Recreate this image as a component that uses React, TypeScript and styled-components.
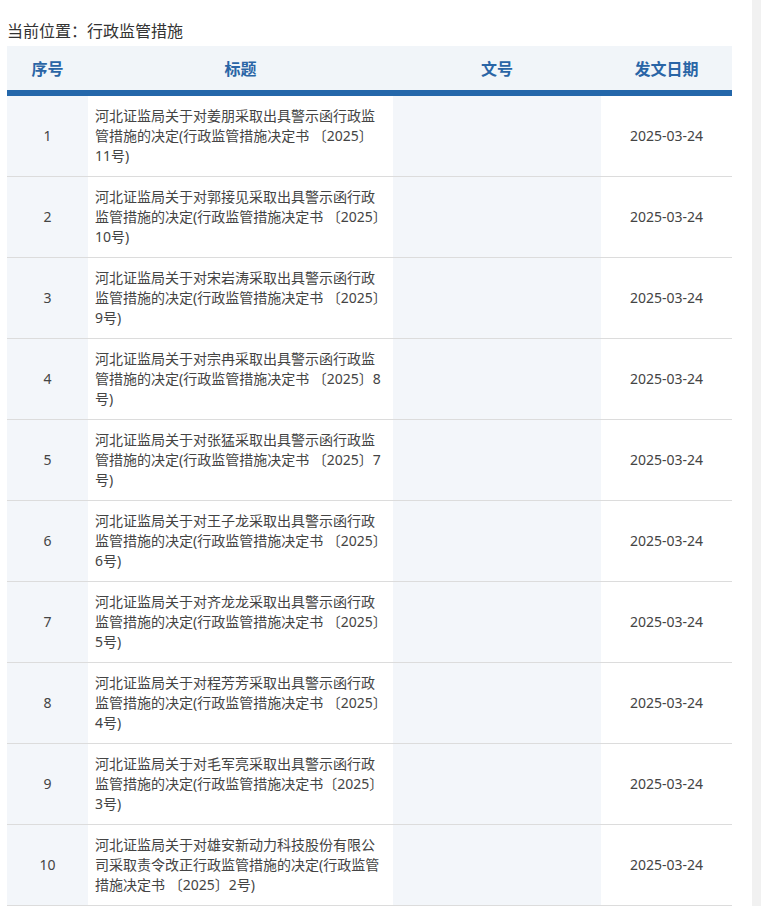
import React from 'react'
import styled, { createGlobalStyle } from 'styled-components'

const GlobalStyle = createGlobalStyle`
  html, body {
    margin: 0;
    padding: 0;
    background: #f1f1f1;
  }
  body {
    font-family: "Noto Sans", "Noto Sans CJK SC", sans-serif;
    color: #333;
  }
`

const Page = styled.div`
  width: 752px;
  min-height: 906px;
  background: #fff;
  padding: 18px 0 0 7px;
  box-sizing: border-box;
`

const Crumb = styled.div`
  font-size: 16px;
  line-height: 26px;
  color: #333;
  margin-bottom: 2px;
`

const Table = styled.table`
  width: 725px;
  border-collapse: collapse;
  table-layout: fixed;
`

const HeadCell = styled.th<{ $w: number }>`
  width: ${p => p.$w}px;
  height: 44px;
  padding: 0;
  background: #f1f5f9;
  color: #2a65a6;
  font-size: 16px;
  font-weight: bold;
  text-align: center;
  border-bottom: 6px solid #2467aa;
`

const Row = styled.tr`
  border-bottom: 1px solid #dcdcdc;
`

const Cell = styled.td<{ $shade?: boolean; $left?: boolean }>`
  height: 80px;
  padding: 0 ${p => (p.$left ? '8px 0 7px' : '0')};
  background: ${p => (p.$shade ? '#f3f6fa' : '#fff')};
  color: #444;
  font-size: 14px;
  line-height: 20px;
  text-align: ${p => (p.$left ? 'left' : 'center')};
  vertical-align: middle;
`

const rows = [
  '河北证监局关于对姜朋采取出具警示函行政监管措施的决定(行政监管措施决定书 〔2025〕11号)',
  '河北证监局关于对郭接见采取出具警示函行政监管措施的决定(行政监管措施决定书 〔2025〕10号)',
  '河北证监局关于对宋岩涛采取出具警示函行政监管措施的决定(行政监管措施决定书 〔2025〕9号)',
  '河北证监局关于对宗冉采取出具警示函行政监管措施的决定(行政监管措施决定书 〔2025〕8号)',
  '河北证监局关于对张猛采取出具警示函行政监管措施的决定(行政监管措施决定书 〔2025〕7号)',
  '河北证监局关于对王子龙采取出具警示函行政监管措施的决定(行政监管措施决定书 〔2025〕6号)',
  '河北证监局关于对齐龙龙采取出具警示函行政监管措施的决定(行政监管措施决定书 〔2025〕5号)',
  '河北证监局关于对程芳芳采取出具警示函行政监管措施的决定(行政监管措施决定书 〔2025〕4号)',
  '河北证监局关于对毛军亮采取出具警示函行政监管措施的决定(行政监管措施决定书〔2025〕3号)',
  '河北证监局关于对雄安新动力科技股份有限公司采取责令改正行政监管措施的决定(行政监管措施决定书 〔2025〕2号)',
]

export default function App() {
  return (
    <>
      <GlobalStyle />
      <Page>
        <Crumb>当前位置：行政监管措施</Crumb>
        <Table>
          <thead>
            <tr>
              <HeadCell $w={81}>序号</HeadCell>
              <HeadCell $w={305}>标题</HeadCell>
              <HeadCell $w={208}>文号</HeadCell>
              <HeadCell $w={131}>发文日期</HeadCell>
            </tr>
          </thead>
          <tbody>
            {rows.map((title, i) => (
              <Row key={i}>
                <Cell $shade>{i + 1}</Cell>
                <Cell $left>{title}</Cell>
                <Cell $shade></Cell>
                <Cell>2025-03-24</Cell>
              </Row>
            ))}
          </tbody>
        </Table>
      </Page>
    </>
  )
}
